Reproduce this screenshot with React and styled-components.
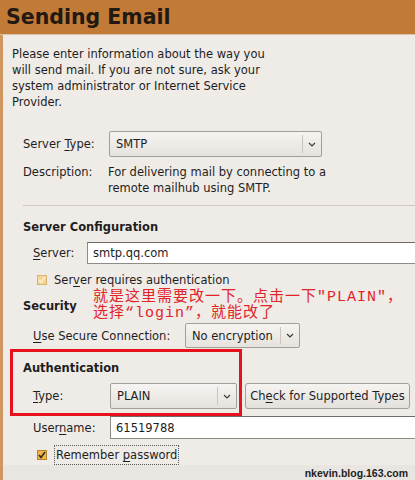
import React from "react";
import styled, { createGlobalStyle } from "styled-components";

const GlobalStyle = createGlobalStyle`
    html, body {
        margin: 0;
        padding: 0;
        background: #efebe7;
    }
    body {
        font-family: "DejaVu Sans", "Noto Sans", sans-serif;
        font-size: 11.5px;
        color: #1e1e1e;
    }
`;

const S = {
    Page: styled.div`
        width: 415px;
        height: 480px;
        overflow: hidden;
        display: flex;
        flex-flow: column;
        background: #efebe7;
    `,
        Header: styled.div`
            height: 34px;
            flex: 0 0 34px;
            background: #c27b37;
            border-bottom: 1px solid #ddc3a8;
            display: flex;
            align-items: center;
            padding-left: 6px;
        `,
            Title: styled.h1`
                margin: 0;
                font-size: 20.5px;
                font-weight: bold;
                color: #211912;
            `,
        Body: styled.div`
            flex: 1;
            display: flex;
            flex-flow: column;
            border-left: 3px solid #cf9660;
            overflow: hidden;
        `,
            Intro: styled.p`
                margin: 11px 0 0 9px;
                line-height: 16px;
                width: 262px;
            `,
            Section: styled.div`
                display: flex;
                flex-flow: column;
                padding-left: 20px;
            `,
                Row: styled.div`
                    display: flex;
                    align-items: ${props => props.align || "center"};
                    margin-top: ${props => props.top || 0}px;
                    padding-left: ${props => props.indent || 0}px;
                `,
                Label: styled.span`
                    flex: 0 0 ${props => props.width}px;
                    line-height: 16px;
                    white-space: nowrap;
                `,
                Key: styled.span`
                    text-decoration: underline;
                    text-underline-offset: 2px;
                `,
                Description: styled.div`
                    line-height: 16px;
                `,
                Separator: styled.div`
                    height: 1px;
                    background: #cdc8c2;
                    margin-top: 9px;
                    margin-right: -4px;
                `,
                Heading: styled.div`
                    font-weight: bold;
                    line-height: 16px;
                    margin-top: ${props => props.top || 0}px;
                    flex: 0 0 ${props => props.width ? props.width + "px" : "auto"};
                `,
                Note: styled.div`
                    font-family: "Liberation Mono", "Noto Sans CJK SC", monospace;
                    font-size: 15px;
                    line-height: 16px;
                    letter-spacing: 1px;
                    color: #e0242a;
                    white-space: nowrap;
                `,
            AuthBlock: styled.div`
                position: relative;
                display: flex;
                flex-flow: column;
                padding: 11px 0 7px 20px;
                margin-top: 1px;
            `,
                Frame: styled.div`
                    position: absolute;
                    left: 7px;
                    top: 0;
                    width: 226px;
                    height: 61px;
                    border: 3px solid #e5111c;
                    pointer-events: none;
                `,
    Combo: styled.div`
        display: flex;
        align-items: center;
        width: ${props => props.width}px;
        height: ${props => props.height || 26}px;
        box-sizing: border-box;
        border: 1px solid #a29e98;
        border-radius: 2px;
        background: linear-gradient(#f6f4f1, #e6e2dd);
    `,
        ComboText: styled.span`
            flex: 1;
            padding-left: 6px;
            white-space: nowrap;
        `,
        ComboArrow: styled.span`
            flex: 0 0 18px;
            align-self: stretch;
            margin: 3px 0;
            border-left: 1px solid #c9c5bf;
            display: flex;
            align-items: center;
            justify-content: center;
        `,
    Entry: styled.div`
        flex: 1;
        height: ${props => props.height || 22}px;
        box-sizing: border-box;
        margin-right: -6px;
        background: #ffffff;
        border: 1px solid #8f8b85;
        border-top-color: #6f6b66;
        display: flex;
        align-items: center;
        padding-left: 5px;
    `,
    Button: styled.div`
        margin-left: 8px;
        width: 165px;
        height: 26px;
        box-sizing: border-box;
        border: 1px solid #a29e98;
        border-radius: 3px;
        background: linear-gradient(#f6f4f1, #e4e0db);
        display: flex;
        align-items: center;
        justify-content: center;
        white-space: nowrap;
    `,
    Check: styled.span`
        width: 10px;
        height: 10px;
        box-sizing: border-box;
        border: 1px solid ${props => props.dim ? "#d9b46a" : "#b5832e"};
        background: ${props => props.dim ? "#f3d79a" : "#f4b544"};
        display: flex;
        align-items: center;
        justify-content: center;
        margin-right: 7px;
    `,
    CheckLabel: styled.span`
        line-height: 16px;
        padding: ${props => props.focused ? "1px 1px" : "0"};
        border: ${props => props.focused ? "1px dotted #5a5a5a" : "none"};
    `,
    Footer: styled.div`
        margin-top: auto;
        height: 16px;
        flex: 0 0 16px;
        background: #e9e5e1;
        display: flex;
        align-items: center;
        justify-content: flex-end;
        padding-right: 7px;
        font-family: "Liberation Sans", Arial, sans-serif;
        font-weight: bold;
        font-size: 10.5px;
        color: #1e1e1e;
    `,
};

const Chevron = () => (
    <svg width="8" height="5" viewBox="0 0 8 5">
        <path d="M1 1 L4 4 L7 1" fill="none" stroke="#3a3a3a" strokeWidth="1.2" />
    </svg>
);

const Tick = ({ color }) => (
    <svg width="8" height="8" viewBox="0 0 8 8">
        <path d="M1 4 L3 6.5 L7 1" fill="none" stroke={color} strokeWidth="1.6" />
    </svg>
);

const ComboBox = ({ value, width, height }) => (
    <S.Combo width={width} height={height}>
        <S.ComboText>{value}</S.ComboText>
        <S.ComboArrow><Chevron /></S.ComboArrow>
    </S.Combo>
);

export default function App() {
    return (
        <>
            <GlobalStyle />
            <S.Page>
                <S.Header>
                    <S.Title>Sending Email</S.Title>
                </S.Header>
                <S.Body>
                    <S.Intro>
                        Please enter information about the way you will send mail. If you are not sure, ask your system administrator or Internet Service Provider.
                    </S.Intro>

                    <S.Section>
                        <S.Row top={21}>
                            <S.Label width={86}>Server <S.Key>T</S.Key>ype:</S.Label>
                            <ComboBox value="SMTP" width={213} />
                        </S.Row>
                        <S.Row top={7} align="flex-start">
                            <S.Label width={85}>Description:</S.Label>
                            <S.Description>
                                For delivering mail by connecting to a<br />
                                remote mailhub using SMTP.
                            </S.Description>
                        </S.Row>
                        <S.Separator />

                        <S.Heading top={13}>Server Configuration</S.Heading>
                        <S.Row top={7} indent={10}>
                            <S.Label width={54}><S.Key>S</S.Key>erver:</S.Label>
                            <S.Entry>smtp.qq.com</S.Entry>
                        </S.Row>
                        <S.Row top={8} indent={14}>
                            <S.Check dim><Tick color="#fbeccb" /></S.Check>
                            <S.CheckLabel>Ser<S.Key>v</S.Key>er requires authentication</S.CheckLabel>
                        </S.Row>

                        <S.Row top={2}>
                            <S.Heading width={70}>Security</S.Heading>
                            <S.Note>
                                就是这里需要改一下。点击一下"PLAIN"，<br />
                                选择“login”，就能改了
                            </S.Note>
                        </S.Row>
                        <S.Row top={1} indent={10}>
                            <S.Label width={152}><S.Key>U</S.Key>se Secure Connection:</S.Label>
                            <ComboBox value="No encryption" width={115} height={25} />
                        </S.Row>
                    </S.Section>

                    <S.AuthBlock>
                        <S.Frame />
                        <S.Heading>Authentication</S.Heading>
                        <S.Row top={7} indent={10}>
                            <S.Label width={77}><S.Key>T</S.Key>ype:</S.Label>
                            <ComboBox value="PLAIN" width={127} />
                            <S.Button>Ch<S.Key>e</S.Key>ck for Supported Types</S.Button>
                        </S.Row>
                    </S.AuthBlock>

                    <S.Section>
                        <S.Row indent={10}>
                            <S.Label width={77}>User<S.Key>n</S.Key>ame:</S.Label>
                            <S.Entry height={23}>61519788</S.Entry>
                        </S.Row>
                        <S.Row top={6} indent={14}>
                            <S.Check><Tick color="#2a2a2a" /></S.Check>
                            <S.CheckLabel focused>Remember <S.Key>p</S.Key>assword</S.CheckLabel>
                        </S.Row>
                    </S.Section>

                    <S.Footer>nkevin.blog.163.com</S.Footer>
                </S.Body>
            </S.Page>
        </>
    );
}
